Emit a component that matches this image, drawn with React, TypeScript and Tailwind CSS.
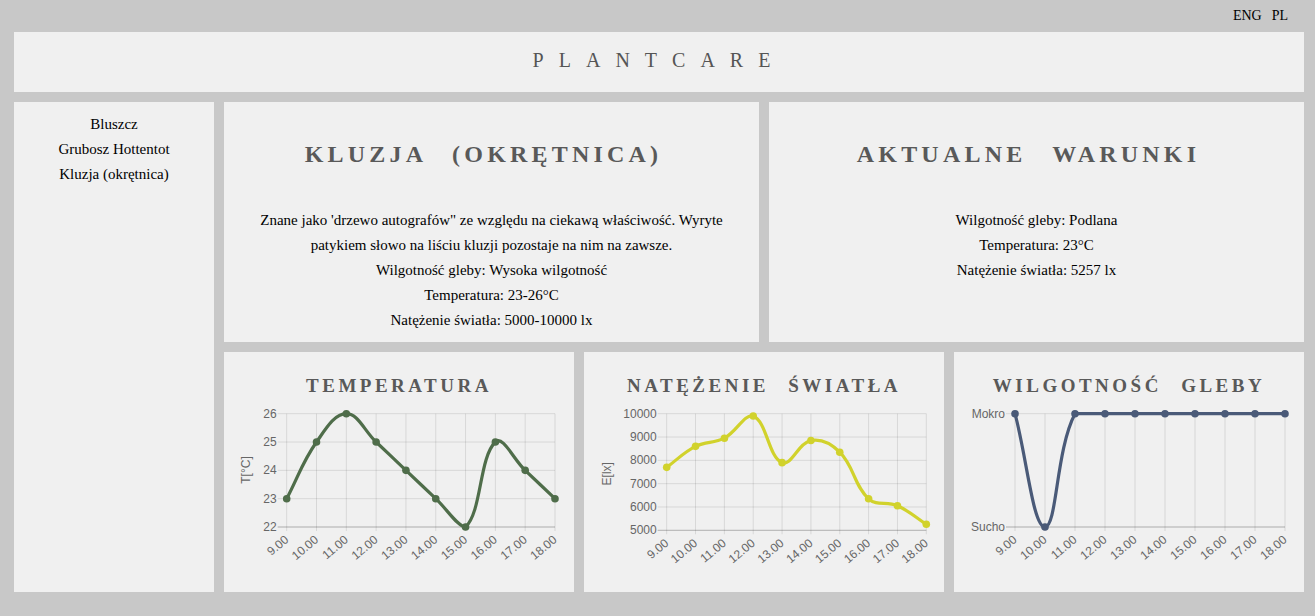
import React from "react";

type Pt = { x: number; y: number };

const hours = ["9.00", "10.00", "11.00", "12.00", "13.00", "14.00", "15.00", "16.00", "17.00", "18.00"];

// cubic spline like chart.js (tension 0.4, control points capped to the plot area)
function splinePath(pts: Pt[], tension: number, area: { top: number; bottom: number; left: number; right: number }) {
  const clampX = (v: number) => Math.max(area.left, Math.min(area.right, v));
  const clampY = (v: number) => Math.max(area.top, Math.min(area.bottom, v));
  const cps = pts.map((cur, i) => {
    const prev = pts[i - 1] ?? cur;
    const next = pts[i + 1] ?? cur;
    const d01 = Math.hypot(cur.x - prev.x, cur.y - prev.y);
    const d12 = Math.hypot(next.x - cur.x, next.y - cur.y);
    let s01 = d01 / (d01 + d12);
    let s12 = d12 / (d01 + d12);
    if (!isFinite(s01)) s01 = 0;
    if (!isFinite(s12)) s12 = 0;
    const fa = tension * s01;
    const fb = tension * s12;
    return {
      prev: { x: clampX(cur.x - fa * (next.x - prev.x)), y: clampY(cur.y - fa * (next.y - prev.y)) },
      next: { x: clampX(cur.x + fb * (next.x - prev.x)), y: clampY(cur.y + fb * (next.y - prev.y)) },
    };
  });
  let d = `M${pts[0].x},${pts[0].y}`;
  for (let i = 1; i < pts.length; i++) {
    d += ` C${cps[i - 1].next.x},${cps[i - 1].next.y} ${cps[i].prev.x},${cps[i].prev.y} ${pts[i].x},${pts[i].y}`;
  }
  return d;
}

type ChartProps = {
  width: number;
  left: number;
  right: number;
  top: number;
  bottom: number;
  min: number;
  max: number;
  values: number[];
  yTicks: { v: number; label: string }[];
  color: string;
  yTitle?: string;
  yTitleX?: number;
  yTitleY?: number;
};

function LineChart({ width, left, right, top, bottom, min, max, values, yTicks, color, yTitle, yTitleX, yTitleY }: ChartProps) {
  const step = (right - left) / (values.length - 1);
  const yOf = (v: number) => bottom - ((v - min) / (max - min)) * (bottom - top);
  const pts = values.map((v, i) => ({ x: left + i * step, y: yOf(v) }));
  const font = "'Liberation Sans', Arial, sans-serif";

  return (
    <svg width={width} height={194} className="block">
      {/* grid */}
      {yTicks.map((t) => (
        <line key={t.label} x1={left - 9} x2={right} y1={yOf(t.v)} y2={yOf(t.v)} stroke="rgba(0,0,0,0.1)" strokeWidth={1} />
      ))}
      {pts.map((p, i) => (
        <line key={i} x1={p.x} x2={p.x} y1={top} y2={bottom + 4} stroke="rgba(0,0,0,0.1)" strokeWidth={1} />
      ))}
      <line x1={left - 9} x2={right} y1={bottom} y2={bottom} stroke="rgba(0,0,0,0.18)" strokeWidth={1} />

      {/* y labels */}
      {yTicks.map((t) => (
        <text key={t.label} x={left - 10} y={yOf(t.v)} textAnchor="end" dominantBaseline="central" fontSize={12} fill="#666" fontFamily={font}>
          {t.label}
        </text>
      ))}
      {yTitle && (
        <text
          x={yTitleX}
          y={yTitleY}
          textAnchor="middle"
          dominantBaseline="central"
          fontSize={12}
          fill="#666"
          fontFamily={font}
          transform={`rotate(-90 ${yTitleX} ${yTitleY})`}
        >
          {yTitle}
        </text>
      )}

      {/* x labels */}
      {pts.map((p, i) => (
        <text
          key={hours[i]}
          x={p.x}
          y={bottom + 11}
          textAnchor="end"
          dominantBaseline="central"
          fontSize={12}
          fill="#666"
          fontFamily={font}
          transform={`rotate(-40 ${p.x} ${bottom + 11})`}
        >
          {hours[i]}
        </text>
      ))}

      {/* line */}
      <path d={splinePath(pts, 0.4, { top, bottom, left, right })} fill="none" stroke={color} strokeWidth={3.2} strokeLinejoin="round" />
      {pts.map((p, i) => (
        <circle key={i} cx={p.x} cy={p.y} r={3.8} fill={color} />
      ))}
    </svg>
  );
}

const titleCls =
  "pt-[22px] text-center text-[19px] leading-[24px] font-bold uppercase tracking-[3.5px] [word-spacing:11px] text-[#595959]";

const headCls =
  "mt-[36px] pr-[16px] text-[24px] leading-[32px] font-bold uppercase tracking-[4.2px] [word-spacing:16px] text-[#595959]";

export default function App() {
  return (
    <div className="min-h-screen bg-[#c8c8c8] pl-[14px] pr-[11px] pb-[24px] text-black" style={{ fontFamily: "'Liberation Serif', 'Times New Roman', serif" }}>
      {/* language switch */}
      <div className="h-[32px] flex items-center justify-end gap-[10px] pr-[16px] pb-[2px] text-[14px]">
        <span>ENG</span>
        <span>PL</span>
      </div>

      {/* header */}
      <header className="h-[60px] bg-[#f0f0f0] flex items-center justify-center pb-[5px]">
        <h1 className="text-[20px] tracking-[15px] text-[#555]">PLANTCARE</h1>
      </header>

      <div className="mt-[10px] flex gap-[10px] h-[490px]">
        {/* plant list */}
        <aside className="w-[200px] shrink-0 bg-[#f0f0f0] pt-[10px] text-center text-[15px] leading-[25px]">
          <div>Bluszcz</div>
          <div>Grubosz Hottentot</div>
          <div>Kluzja (okrętnica)</div>
        </aside>

        <div className="flex-1 flex flex-col gap-[10px]">
          <div className="flex gap-[10px] h-[240px]">
            <section className="flex-1 bg-[#f0f0f0] text-center">
              <h2 className={headCls}>Kluzja (okrętnica)</h2>
              <div className="mt-[38px] px-[30px] text-[15px] leading-[25px]">
                <p>
                  Znane jako 'drzewo autografów" ze względu na ciekawą właściwość. Wyryte patykiem słowo na liściu kluzji pozostaje na nim na zawsze.
                </p>
                <p>Wilgotność gleby: Wysoka wilgotność</p>
                <p>Temperatura: 23-26°C</p>
                <p>Natężenie światła: 5000-10000 lx</p>
              </div>
            </section>
            <section className="flex-1 bg-[#f0f0f0] text-center">
              <h2 className={headCls}>Aktualne warunki</h2>
              <div className="mt-[38px] px-[30px] text-[15px] leading-[25px]">
                <p>Wilgotność gleby: Podlana</p>
                <p>Temperatura: 23°C</p>
                <p>Natężenie światła: 5257 lx</p>
              </div>
            </section>
          </div>

          <div className="flex gap-[10px] h-[240px]">
            <section className="w-[350px] bg-[#f0f0f0]">
              <h3 className={titleCls}>Temperatura</h3>
              <LineChart
                width={350}
                left={62.7}
                right={331}
                top={15.7}
                bottom={129}
                min={22}
                max={26}
                values={[23, 25, 26, 25, 24, 23, 22, 25, 24, 23]}
                yTicks={[26, 25, 24, 23, 22].map((v) => ({ v, label: String(v) }))}
                color="#4f6d4a"
                yTitle="T[°C]"
                yTitleX={21.7}
                yTitleY={72}
              />
            </section>
            <section className="w-[360px] bg-[#f0f0f0]">
              <h3 className={titleCls}>Natężenie światła</h3>
              <LineChart
                width={360}
                left={82.7}
                right={342.3}
                top={15.7}
                bottom={132.3}
                min={5000}
                max={10000}
                values={[7700, 8600, 8950, 9900, 7900, 8850, 8350, 6350, 6050, 5257]}
                yTicks={[10000, 9000, 8000, 7000, 6000, 5000].map((v) => ({ v, label: String(v) }))}
                color="#d1d22c"
                yTitle="E[lx]"
                yTitleX={22.7}
                yTitleY={75.7}
              />
            </section>
            <section className="w-[350px] bg-[#f0f0f0]">
              <h3 className={titleCls}>Wilgotność gleby</h3>
              <LineChart
                width={350}
                left={61}
                right={331}
                top={15.7}
                bottom={129}
                min={0}
                max={1}
                values={[1, 0, 1, 1, 1, 1, 1, 1, 1, 1]}
                yTicks={[
                  { v: 1, label: "Mokro" },
                  { v: 0, label: "Sucho" },
                ]}
                color="#4a5a78"
              />
            </section>
          </div>
        </div>
      </div>
    </div>
  );
}
